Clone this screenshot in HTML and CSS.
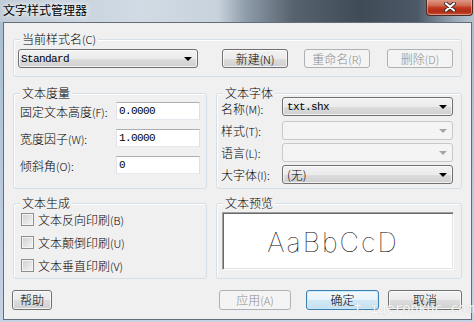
FILE: index.html
```html
<!DOCTYPE html>
<html lang="zh-CN">
<head>
  <meta charset="UTF-8" />
  <title>文字样式管理器</title>
  <link rel="stylesheet" href="styles.css">
</head>
<body>

<div class="window">
  <div class="titlebar">
    <span class="title">文字样式管理器</span>
    <div class="close-btn">
      <svg width="12" height="10" viewBox="0 0 12 10">
        <path d="M2 1.5 L10 8.5 M10 1.5 L2 8.5" stroke="#3a2a28" stroke-width="4" stroke-linecap="round"/>
        <path d="M2 1.5 L10 8.5 M10 1.5 L2 8.5" stroke="#fff" stroke-width="2.2" stroke-linecap="round"/>
      </svg>
    </div>
  </div>

  <div class="client">

    <!-- 当前样式名 -->
    <div class="group g-current">
      <span class="legend">当前样式名<small>(C)</small></span>
      <div class="combo combo-style"><span class="mono">Standard</span><i class="arrow"></i></div>
      <button class="btn btn-new">新建<small>(N)</small></button>
      <button class="btn btn-rename" disabled>重命名<small>(R)</small></button>
      <button class="btn btn-delete" disabled>删除<small>(D)</small></button>
    </div>

    <div class="row row-mid">
      <!-- 文本度量 -->
      <div class="group g-metric">
        <span class="legend">文本度量</span>
        <label>固定文本高度<small>(F):</small></label>
        <input type="text" class="field mono" value="0.0000">
        <label>宽度因子<small>(W):</small></label>
        <input type="text" class="field mono" value="1.0000">
        <label>倾斜角<small>(O):</small></label>
        <input type="text" class="field mono" value="0">
      </div>

      <!-- 文本字体 -->
      <div class="group g-font">
        <span class="legend">文本字体</span>
        <label class="first">名称<small>(M):</small></label>
        <div class="combo first"><span class="mono">txt.shx</span><i class="arrow"></i></div>
        <label>样式<small>(T):</small></label>
        <div class="combo disabled"><span></span><i class="arrow"></i></div>
        <label>语言<small>(L):</small></label>
        <div class="combo disabled"><span></span><i class="arrow"></i></div>
        <label>大字体<small>(I):</small></label>
        <div class="combo"><span>(无)</span><i class="arrow"></i></div>
      </div>
    </div>

    <div class="row row-low">
      <!-- 文本生成 -->
      <div class="group g-gen">
        <span class="legend">文本生成</span>
        <label class="check"><span class="box"></span><span>文本反向印刷<small>(B)</small></span></label>
        <label class="check"><span class="box"></span><span>文本颠倒印刷<small>(U)</small></span></label>
        <label class="check"><span class="box"></span><span>文本垂直印刷<small>(V)</small></span></label>
      </div>

      <!-- 文本预览 -->
      <div class="group g-preview">
        <span class="legend">文本预览</span>
        <div class="preview">AaBbCcD</div>
      </div>
    </div>

    <div class="footer">
      <button class="btn btn-help">帮助</button>
      <span class="spacer"></span>
      <button class="btn btn-apply" disabled>应用<small>(A)</small></button>
      <button class="btn btn-ok">确定</button>
      <button class="btn btn-cancel">取消</button>
    </div>
  </div>

  <span class="watermark">t.igeronkuc.com</span>
</div>

</body>
</html>
```

FILE: styles.css
```css
* {
  box-sizing: border-box;
}
body {
  margin: 0;
  width: 474px;
  height: 322px;
  overflow: hidden;
  font-family: "Noto Sans CJK SC", "Liberation Sans", sans-serif;
  font-size: 12px;
  font-weight: 300;
  color: #000;
}
small {
  font-size: 11px;
}
.window {
  position: relative;
  width: 474px;
  height: 322px;
  background: linear-gradient(to bottom, #a9bcd0, #c3d3e4);
  display: flex;
  flex-direction: column;
}
.titlebar {
  position: relative;
  height: 22px;
  padding-left: 3px;
  background: linear-gradient(to right, #bfcbd7 0%, #d2dbe4 30%, #c8d2dc 46%, #8e9ba8 52%, #56626e 62%, #3f4b57 76%, #4c5865 88%, #9aa8b6 96%, #b6c3cf 100%);
}
.title {
  display: block;
  line-height: 20px;
  font-weight: 400;
  text-shadow: 0 0 4px #fff, 0 0 8px #fff;
}
.close-btn {
  position: absolute;
  left: 426px;
  top: -1px;
  width: 47px;
  height: 17px;
  border: 1px solid #4b2b26;
  border-top: none;
  border-radius: 0 0 4px 4px;
  background: linear-gradient(to bottom, #e1a08f 0%, #d06a54 40%, #c0391f 55%, #b02c15 80%, #c9563a 100%);
  box-shadow: inset 0 0 0 1px rgba(255, 220, 210, 0.45);
  display: flex;
  align-items: center;
  justify-content: center;
}
.close-btn svg {
  display: block;
}

.client {
  flex: 1;
  margin: 0 2px 2px 3px;
  border: 1px solid #646e79;
  background: #f0f0f0;
  padding: 16px 9px 0 9px;
}

/* group boxes */
.group {
  position: relative;
  border: 1px solid #d5dfe5;
  border-radius: 3px;
  box-shadow: inset 1px 1px 0 #fff;
}
.legend {
  position: absolute;
  left: 6px;
  top: -7px;
  padding: 0 2px;
  line-height: 12px;
  background: #f0f0f0;
}

.g-current {
  height: 38px;
  display: flex;
  align-items: flex-start;
  padding: 9px 0 0 4px;
}
.combo-style {
  width: 180px;
  height: 20px;
}
.btn-new {
  margin-left: 24px;
}
.btn-rename {
  margin-left: 16px;
}
.btn-delete {
  margin-left: 17px;
}
.g-current .btn {
  width: 66px;
  height: 19px;
}

.row {
  display: flex;
  gap: 9px;
}
.row-mid {
  margin-top: 16px;
  height: 96px;
}
.row-low {
  margin-top: 14px;
  height: 76px;
}

.g-metric {
  width: 194px;
  display: grid;
  grid-template-columns: 1fr 84px;
  grid-auto-rows: 18px;
  row-gap: 9px;
  align-items: center;
  padding: 8px 6px 0 6px;
}
.g-font {
  flex: 1;
  display: grid;
  grid-template-columns: 1fr 171px;
  grid-template-rows: 21px 19px 19px 19px;
  row-gap: 3px;
  align-items: center;
  padding: 3px 8px 0 4px;
}
.g-font .first {
  align-self: end;
  margin-bottom: 2px;
}
.g-font label.first {
  line-height: 15px;
  margin-bottom: 1px;
}

.field {
  width: 84px;
  height: 18px;
  padding: 0 2px;
  border: 1px solid;
  border-color: #abadb3 #dbdfe6 #e3e9ef #e2e3ea;
  background: #fff;
  outline: none;
}
.mono {
  font-family: "Liberation Mono", "DejaVu Sans Mono", monospace;
  font-size: 11px;
  font-weight: 400;
  letter-spacing: -0.6px;
  color: #000;
}

/* dropdown */
.combo {
  height: 19px;
  display: flex;
  align-items: center;
  justify-content: space-between;
  padding: 0 4px 0 4px;
  border: 1px solid #707070;
  border-radius: 3px;
  background: linear-gradient(to bottom, #f2f2f2 0%, #ebebeb 50%, #dddddd 51%, #cfcfcf 100%);
  box-shadow: inset 0 0 0 1px rgba(255, 255, 255, 0.7);
}
.combo-style {
  padding-left: 2px;
}
.arrow {
  width: 0;
  height: 0;
  border-left: 4px solid transparent;
  border-right: 4px solid transparent;
  border-top: 4px solid #000;
  margin-right: 1px;
}
.combo.disabled {
  border-color: #c5c9cc;
  background: #f4f4f4;
  box-shadow: none;
}
.combo.disabled .arrow {
  border-top-color: #a6a6a6;
}

/* buttons */
.btn {
  font-family: "Noto Sans CJK SC", "Liberation Sans", sans-serif;
  font-size: 12px;
  font-weight: 300;
  color: #000;
  padding: 0;
  line-height: 16px;
  border: 1px solid #707070;
  border-radius: 3px;
  background: linear-gradient(to bottom, #f2f2f2 0%, #ebebeb 50%, #dddddd 51%, #cfcfcf 100%);
  box-shadow: inset 0 0 0 1px rgba(255, 255, 255, 0.75);
}
.btn:disabled {
  color: #8d8d8d;
  border-color: #adb2b5;
  background: #f4f4f4;
  box-shadow: none;
}
.btn-ok {
  border-color: #3c7fb1;
  background: linear-gradient(to bottom, #f3f9fd 0%, #e5f2fa 50%, #d3e8f5 51%, #c6e0f0 100%);
  box-shadow: inset 0 0 0 1px rgba(200, 235, 255, 0.9);
}

/* checkboxes */
.g-gen {
  width: 194px;
  display: flex;
  flex-direction: column;
  gap: 10px;
  padding: 9px 0 0 7px;
}
.check {
  display: flex;
  align-items: center;
  height: 13px;
  gap: 4px;
}
.box {
  width: 13px;
  height: 13px;
  border: 1px solid #8e8f8f;
  background: linear-gradient(135deg, #cfcfcf 0%, #e6e6e6 60%, #f4f4f4 100%);
  box-shadow: inset 0 0 0 1px #f4f4f4;
}

/* preview */
.g-preview {
  flex: 1;
  padding: 8px 7px 0 5px;
}
.preview {
  height: 58px;
  background: #fff;
  border: 1px solid;
  border-color: #a0a0a0 #ffffff #ffffff #a0a0a0;
  box-shadow: inset 1px 1px 0 #696969, inset -1px -1px 0 #e3e3e3;
  display: flex;
  align-items: center;
  justify-content: center;
  padding: 2px 10px 0 0;
  font-family: "DejaVu Sans ExtraLight", "Inter", "Noto Sans", sans-serif;
  font-weight: 100;
  font-size: 27px;
  letter-spacing: 2px;
  color: #000;
}

/* footer */
.footer {
  margin-top: 11px;
  height: 20px;
  display: flex;
}
.footer .btn {
  height: 20px;
}
.btn-help {
  width: 40px;
  margin-left: -1px;
}
.spacer {
  flex: 1;
}
.btn-apply {
  width: 72px;
}
.btn-ok {
  width: 73px;
  margin-left: 15px;
}
.btn-cancel {
  width: 74px;
  margin-left: 9px;
}

.watermark {
  position: absolute;
  left: 354px;
  top: 300px;
  font-family: "DejaVu Sans Mono", monospace;
  font-size: 14px;
  letter-spacing: -0.4px;
  color: rgba(255, 255, 255, 0.9);
  text-shadow: 0 0 1px rgba(120, 120, 120, 0.4);
}
```
